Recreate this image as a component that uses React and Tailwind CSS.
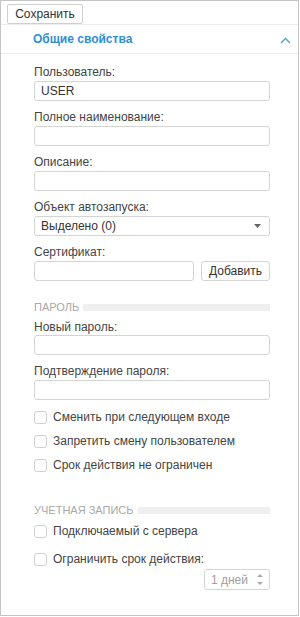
import React from "react";

const font = { fontFamily: '"Liberation Sans", Arial, sans-serif' };

const Field = ({ label, value, first }) => (
  <div className={first ? "" : "mt-[9px]"}>
    <div className="h-[14px] leading-[14px] text-[12px] text-[#444]">{label}</div>
    <div className="mt-[2px] h-[20px] border border-[#d4d4d4] rounded-[3px] px-[6px] flex items-center text-[12px] text-[#333]">
      {value}
    </div>
  </div>
);

const Section = ({ title, className }) => (
  <div className={"flex items-center h-[14px] " + className}>
    <span className="text-[11px] leading-[14px] text-[#a8a8a8] uppercase">{title}</span>
    <div className="ml-[4px] flex-1 h-[7px] bg-[#efefef]" />
  </div>
);

const Check = ({ label, className }) => (
  <div className={"flex items-center " + className}>
    <div className="w-[13px] h-[13px] border border-[#d0d0d0] rounded-[3px] bg-white" />
    <span className="ml-[6px] text-[12px] text-[#444]">{label}</span>
  </div>
);

const App = () => {
  return (
    <div className="w-[300px] h-[617px] bg-white" style={font}>
      <div className="w-[299px] h-[616px] border border-[#c4c4c4] flex flex-col">
        <div className="h-[24px] border-b border-[#ececec]">
          <button className="ml-[6px] mt-[2px] h-[20px] w-[76px] border border-[#cfcfcf] rounded-[2px] bg-white text-[12px] text-[#333] leading-[18px]">
            Сохранить
          </button>
        </div>

        <div className="h-[29px] border-b border-[#ececec] flex items-center justify-between pl-[32px] pr-[7px]">
          <span className="text-[12px] font-bold text-[#2d8fd5]">Общие свойства</span>
          <svg width="11" height="7" viewBox="0 0 11 7" className="mt-[2px]">
            <polyline points="1,6 5.5,1.5 10,6" fill="none" stroke="#4aa0dc" strokeWidth="1.3" />
          </svg>
        </div>

        <div className="pl-[33px] pt-[11px] w-[269px] flex flex-col">
          <Field label="Пользователь:" value="USER" first />
          <Field label="Полное наименование:" />
          <Field label="Описание:" />
          <div className="mt-[9px]">
            <div className="h-[14px] leading-[14px] text-[12px] text-[#444]">Объект автозапуска:</div>
            <div className="mt-[2px] h-[20px] border border-[#d4d4d4] rounded-[3px] pl-[6px] pr-[8px] flex items-center justify-between text-[12px] text-[#333]">
              <span>Выделено (0)</span>
              <svg width="7" height="4" viewBox="0 0 7 4">
                <polygon points="0,0 7,0 3.5,4" fill="#666" />
              </svg>
            </div>
          </div>
          <div className="mt-[9px]">
            <div className="h-[14px] leading-[14px] text-[12px] text-[#444]">Сертификат:</div>
            <div className="mt-[2px] flex gap-[7px]">
              <div className="h-[20px] w-[160px] border border-[#d4d4d4] rounded-[3px]" />
              <button className="h-[20px] flex-1 border border-[#d4d4d4] rounded-[3px] bg-white text-[12px] text-[#333]">
                Добавить
              </button>
            </div>
          </div>

          <Section title="Пароль" className="mt-[19px]" />
          <div className="mt-[6px]">
            <div className="h-[14px] leading-[14px] text-[12px] text-[#444]">Новый пароль:</div>
            <div className="mt-[1px] h-[20px] border border-[#d4d4d4] rounded-[3px]" />
          </div>
          <Field label="Подтверждение пароля:" />

          <Check label="Сменить при следующем входе" className="mt-[5px] h-[24px]" />
          <Check label="Запретить смену пользователем" className="h-[24px]" />
          <Check label="Срок действия не ограничен" className="h-[24px]" />

          <Section title="Учетная запись" className="mt-[26px]" />
          <Check label="Подключаемый с сервера" className="mt-[2px] h-[24px]" />
          <Check label="Ограничить срок действия:" className="mt-[6px] h-[20px]" />
          <div className="self-end mt-0 w-[66px] h-[21px] border border-[#d4d4d4] rounded-[3px] flex items-center justify-end pr-[6px] text-[12px] text-[#a0a0a0]">
            <span>1 дней</span>
            <svg width="6" height="13" viewBox="0 0 6 13" className="ml-[9px]">
              <polygon points="0,4 6,4 3,1" fill="#aaa" />
              <polygon points="0,9 6,9 3,12" fill="#aaa" />
            </svg>
          </div>
        </div>
      </div>
    </div>
  );
};

export default App;
